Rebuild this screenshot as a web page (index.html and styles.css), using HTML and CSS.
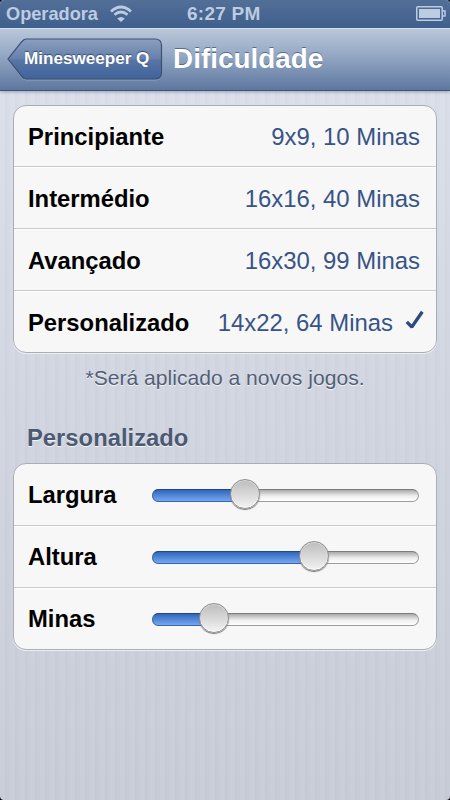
FILE: index.html
```html
<!DOCTYPE html>
<html lang="pt">
<head>
<meta charset="utf-8">
<title>Dificuldade</title>
<link rel="stylesheet" href="styles.css">
</head>
<body>
<header class="status">
  <span class="carrier">Operadora</span>
  <svg class="wifi" width="24" height="18" viewBox="0 0 24 18">
    <path d="M2 6.400Q12-2.400 22 6.400M5.500 9.800Q12 4.200 18.500 9.800" fill="none" stroke="currentColor" stroke-width="2.7"/>
    <path d="M8.200 13.400Q12 10.400 15.800 13.400L12 17Z" fill="currentColor"/>
  </svg>
  <span class="time">6:27 PM</span>
  <svg class="battery" width="30" height="15" viewBox="0 0 30 15">
    <rect x=".75" y=".75" width="25.5" height="13.5" rx="1" fill="none" stroke="currentColor" stroke-width="1.5"/>
    <rect x="3" y="3" width="21" height="9" fill="currentColor"/>
    <path d="M27 5h2v5h-2" fill="none" stroke="currentColor" stroke-width="1.5"/>
  </svg>
</header>
<nav class="navbar">
  <a class="back">
    <svg class="back-shape" width="156" height="43" viewBox="0 0 156 43">
      <defs><linearGradient id="back" x2="0" y2="1"><stop offset="0" stop-color="#8b9fbe"/><stop offset=".5" stop-color="#6580ab"/><stop offset=".52" stop-color="#5875a4"/><stop offset="1" stop-color="#40639b"/></linearGradient></defs>
      <path d="M18 2H148Q154.500 2 154.500 8.500V36Q154.500 42 148 42H19Q17 42 14.500 39L1 22 14.500 5Q17 2 19 2Z" fill="none" stroke="#a9b9d1" stroke-opacity=".6"/>
      <path d="M19 1H148Q154.500 1 154.500 7.500V34.500Q154.500 41 148 41H19Q17 41 14.500 38L1 21 14.500 4Q17 1 19 1Z" fill="url(#back)" stroke="#3c5070" stroke-width="1.200"/>
    </svg>
    <span class="back-label">Minesweeper Q</span>
  </a>
  <h1>Dificuldade</h1>
</nav>
<main>
  <section class="group">
    <div class="row"><b>Principiante</b><span class="value">9x9, 10 Minas</span></div>
    <div class="row"><b>Intermédio</b><span class="value">16x16, 40 Minas</span></div>
    <div class="row"><b>Avançado</b><span class="value">16x30, 99 Minas</span></div>
    <div class="row checked"><b>Personalizado</b><span class="value">14x22, 64 Minas</span>
      <svg class="check" width="20" height="20" viewBox="0 0 20 20"><path d="M1.800 11.800L6.800 17L17.300 1.800" fill="none" stroke="#2d4b80" stroke-width="3.300" stroke-linejoin="bevel"/></svg>
    </div>
  </section>
  <p class="note">*Será aplicado a novos jogos.</p>
  <h2>Personalizado</h2>
  <section class="group sliders">
    <div class="row"><b>Largura</b><div class="slider"><div class="fill" style="width:93px"><i class="thumb"></i></div></div></div>
    <div class="row"><b>Altura</b><div class="slider"><div class="fill" style="width:162px"><i class="thumb"></i></div></div></div>
    <div class="row"><b>Minas</b><div class="slider"><div class="fill" style="width:62px"><i class="thumb"></i></div></div></div>
  </section>
</main>
</body>
</html>
```
FILE: styles.css
```css
* { box-sizing: border-box; }
html { background: #000; }
body {
  margin: 0;
  height: 800px;
  overflow: hidden;
  font-family: "Liberation Sans", Arial, sans-serif;
  border-radius: 4px;
  background:
    repeating-linear-gradient(90deg, rgba(255,255,255,.05) 0 5px, rgba(130,145,175,.03) 5px 7px, transparent 7px 10px),
    linear-gradient(#d9dee8 90px, #d0d5e0 380px, #c6cbd5 800px);
}
.status {
  height: 28px;
  display: flex;
  align-items: center;
  position: relative;
  padding: 0 4px 0 6px;
  color: #bdcce1;
  font-weight: bold;
  background: linear-gradient(#526f97, #3f5f8d);
  border-radius: 4px 4px 0 0;
}
.carrier { font-size: 18.200px; padding-top: 1px; }
.wifi { margin-left: 11px; }
.time { position: absolute; left: 187px; font-size: 19px; letter-spacing: .25px; }
.battery { margin-left: auto; margin-top: -1px; }
.navbar {
  height: 63px;
  display: flex;
  padding: 9px 0 0 7px;
  border-top: 1px solid #d4dde9;
  border-bottom: 1px solid #3f5577;
  background: linear-gradient(#bac7da, #8ea2c0 50%, #5d789f);
  box-shadow: 0 1px 3px rgba(50,65,95,.4);
}
.back { position: relative; width: 156px; height: 43px; }
.back-shape { display: block; }
.back-label {
  position: absolute;
  left: 17px;
  top: 0;
  line-height: 42px;
  font-size: 17.100px;
  font-weight: bold;
  color: #fff;
  white-space: nowrap;
  text-shadow: 0 -1px 1px #344b70;
}
h1 {
  margin: 0 0 0 10px;
  font-size: 27.900px;
  line-height: 42px;
  color: #fff;
  text-shadow: 0 -1.400px 0 #596b88;
}
main { padding: 14px 13px 0; }
.group {
  border: 1px solid #a9adb5;
  border-radius: 13px;
  background: #f7f7f7;
  box-shadow: 0 1px 0 #eceff4;
}
.row {
  height: 62px;
  display: flex;
  align-items: center;
  justify-content: space-between;
  padding: 2px 16px 0 14px;
  border-bottom: 1px solid #c9c9c9;
  box-shadow: inset 0 1px 0 #fff;
  font-size: 23.800px;
}
.row:first-child { height: 61px; box-shadow: none; }
.row:last-child { height: 61px; border-bottom: 0; border-radius: 0 0 12px 12px; }
.sliders .row:first-child { height: 62px; }
.sliders .row { padding-top: 1px; }
.value { color: #385487; font-size: 23.900px; }
.checked { padding-right: 11px; }
.checked .value { margin-left: auto; margin-right: 12px; }
.check { margin-top: -6px; }
.note {
  margin: 11px 0 0;
  text-align: center;
  font-size: 21.100px;
  line-height: 28px;
  color: #535e75;
  text-shadow: 0 1px 0 #f3f5f9;
}
h2 {
  margin: 30px 0 9px 14px;
  font-size: 23.800px;
  line-height: 32px;
  color: #4d5973;
  text-shadow: 0 1px 0 #f3f5f9;
}
.slider {
  width: 267px;
  height: 13px;
  margin-right: 1px;
  border-radius: 7px;
  border: 1px solid #9c9c9c;
  border-top-color: #7c7c7c;
  background: linear-gradient(#aaa, #eee 55%, #fff);
}
.fill {
  position: relative;
  height: 13px;
  margin: -1px 0 0 -1px;
  border-radius: 7px 0 0 7px;
  border: 1px solid #3d65ac;
  border-top-color: #214789;
  background: linear-gradient(#3265b9, #72a8f5);
}
.thumb {
  position: absolute;
  right: -16px;
  top: -11px;
  width: 30px;
  height: 30px;
  border-radius: 50%;
  border: 1px solid #909090;
  background: linear-gradient(#bcbcbc, #f3f3f3);
  box-shadow: 0 1px 1px #777, inset 0 1px 1px #ddd, inset 0 -1px 1px #fff;
}
```
